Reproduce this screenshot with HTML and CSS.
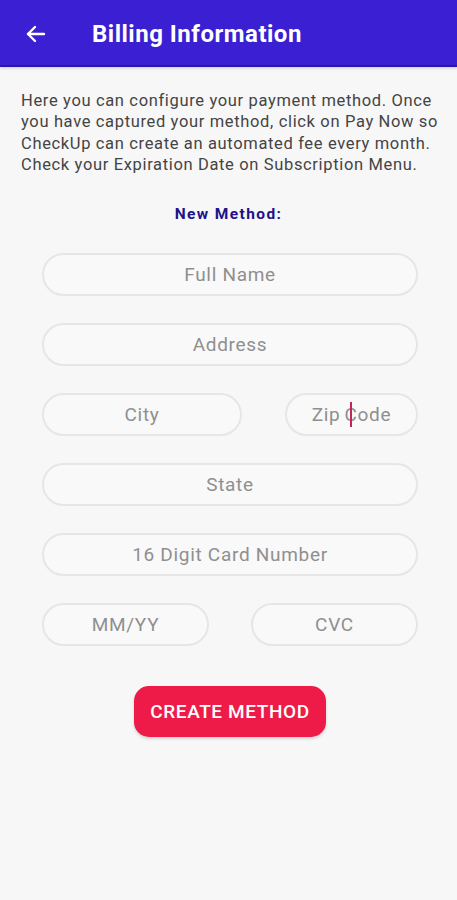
FILE: index.html
```html
<!DOCTYPE html>
<html lang="en">
<head>
    <meta charset="UTF-8">
    <meta name="viewport" content="width=device-width, initial-scale=1.0">
    <title>Billing Information</title>
    <link rel="stylesheet" href="styles.css">
</head>
<body>
    <header class="app-bar">
        <button class="back-button" aria-label="Back">
            <svg class="icon" viewBox="0 0 24 24">
                <path d="M20 12H4"></path>
                <path d="M11 5l-7 7 7 7"></path>
            </svg>
        </button>
        <h1 class="title">Billing Information</h1>
    </header>

    <main class="content">
        <p class="intro">Here you can configure your payment method. Once you have captured your method, click on Pay Now so CheckUp can create an automated fee every month. Check your Expiration Date on Subscription Menu.</p>

        <h2 class="section-title">New Method:</h2>

        <form class="billing-form">
            <div class="field">Full Name</div>
            <div class="field">Address</div>
            <div class="row">
                <div class="field field-city">City</div>
                <div class="field field-zip">Zip <span class="cursor"></span>Code</div>
            </div>
            <div class="field">State</div>
            <div class="field">16 Digit Card Number</div>
            <div class="row">
                <div class="field field-half">MM/YY</div>
                <div class="field field-half">CVC</div>
            </div>
            <button type="button" class="create-button">CREATE METHOD</button>
        </form>
    </main>
</body>
</html>
```

FILE: styles.css
```css
* {
    margin: 0;
    padding: 0;
    box-sizing: border-box;
    font-family: Roboto, "Noto Sans", sans-serif;
}

body {
    min-height: 100vh;
    background: #f7f7f7;
    color: #333;
}

.app-bar {
    height: 67px;
    display: flex;
    align-items: center;
    background: #3a1fd3;
    border-bottom: 2px solid #2c16a8;
    box-shadow: 0 1px 3px rgba(0, 0, 0, 0.2);
}

.back-button {
    width: 72px;
    height: 100%;
    padding-left: 24px;
    padding-top: 2px;
    display: flex;
    align-items: center;
    background: none;
    border: none;
    color: white;
}

.title {
    margin: 3px 0 0 20px;
    color: white;
    font-size: 24px;
    font-weight: bold;
    letter-spacing: 0.5px;
}

.content {
    padding: 23px 20px 40px;
}

.intro {
    margin-right: -10px;
    padding-left: 1px;
    font-size: 16.5px;
    line-height: 21.4px;
    letter-spacing: 0.65px;
    color: #444;
}

.section-title {
    margin-top: 29px;
    text-align: center;
    font-size: 15.5px;
    font-weight: bold;
    letter-spacing: 1.4px;
    color: #1d1289;
}

.billing-form {
    width: 376px;
    margin: 30px 0 0 22px;
    display: flex;
    flex-direction: column;
    gap: 27px;
}

.row {
    display: flex;
    justify-content: space-between;
}

.field {
    height: 43px;
    display: flex;
    align-items: center;
    justify-content: center;
    border: 2.5px solid #e6e6e6;
    border-radius: 22px;
    background: #f9f9f9;
    font-size: 19px;
    letter-spacing: 0.7px;
    color: #8f8f8f;
}

.field-city {
    width: 200px;
}

.field-zip {
    width: 133px;
}

.field-half {
    width: 167px;
}

/* text caret sits over the C */
.cursor {
    position: relative;
    left: 6px;
    display: inline-block;
    width: 2px;
    height: 25px;
    margin: 0 -2px 0 4px;
    background: #c4245a;
    vertical-align: middle;
}

.create-button {
    align-self: center;
    width: 192px;
    height: 51px;
    margin-top: 13px;
    border: none;
    border-radius: 15px;
    background: #ee1b49;
    color: white;
    font-size: 19px;
    font-weight: 500;
    letter-spacing: 0.6px;
    box-shadow: 0 2px 3px rgba(0, 0, 0, 0.15);
}

/* SVG Icons */
.icon {
    width: 24px;
    height: 24px;
    fill: none;
    stroke: currentColor;
    stroke-width: 2.4;
    stroke-linecap: round;
    stroke-linejoin: round;
}
```
